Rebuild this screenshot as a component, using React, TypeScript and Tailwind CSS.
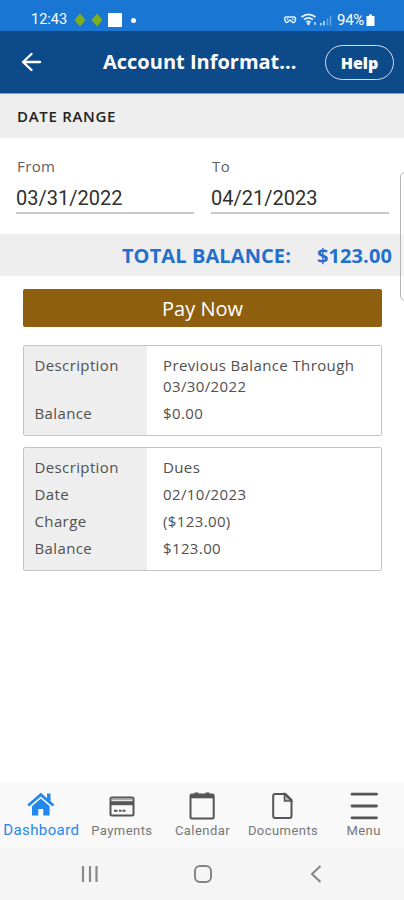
import type { ReactNode } from "react";

const PREVIOUS_BALANCE = [
  { label: "Description", value: "Previous Balance Through 03/30/2022" },
  { label: "Balance", value: "$0.00" },
];

const DUES = [
  { label: "Description", value: "Dues" },
  { label: "Date", value: "02/10/2023" },
  { label: "Charge", value: "($123.00)" },
  { label: "Balance", value: "$123.00" },
];

function StatusBar() {
  return (
    <div className="flex h-[31px] items-start justify-between bg-[#1976d2] pr-[29px] pl-[31px] font-['Roboto',sans-serif] text-white">
      <div className="flex items-center pt-[11px]">
        <span className="w-[37px] text-[14.5px] leading-[18px] whitespace-nowrap">12:43</span>
        <svg viewBox="0 0 32 18" className="ml-1.5 h-[18px] w-8" fill="#7fae1e">
          <path d="M6 2.5l5.5 6.5L6 15.5.5 9z" />
          <path d="M23 2.5L28.5 9 23 15.5 17.5 9z" />
        </svg>
        <div className="ml-0.5 h-3.5 w-3.5 bg-white" />
        <div className="ml-[9px] h-[5px] w-[5px] rounded-full bg-white" />
      </div>
      <div className="flex items-center pt-[11px]">
        <svg viewBox="0 0 50 18" className="h-[18px] w-[50px]" fill="none" stroke="#e4f0fb">
          <path d="M3 6h8a1.6 1.6 0 011.5 2l-.6 2.5a1.5 1.5 0 01-2.6.5L7 9l-2.3 2a1.5 1.5 0 01-2.5-.8L1.6 7.5A1.4 1.4 0 013 6zM3.8 8.2h1.5M9 8.2h1.5" strokeWidth="1.5" />
          <path d="M18.5 6c4.5-3.5 9.5-3.5 14 0M21 8.7c2.8-2.4 6.2-2.4 9 0M23.3 11.2c1.5-1.2 2.9-1.2 4.4 0" strokeWidth="1.7" />
          <path d="M25.5 11l1.7 1.7-1.7 1.8-1.7-1.8z" fill="#e4f0fb" stroke="none" />
          <path d="M32 11v3M38 12v2.5M41 10v4.5" strokeWidth="1.6" opacity="0.85" />
          <path d="M44.5 7.5v7M47.5 4.5v10" strokeWidth="1.5" opacity="0.4" />
        </svg>
        <span className="ml-1 w-[29px] text-[15px] leading-[18px] tracking-[-0.3px] whitespace-nowrap">94%</span>
        <svg viewBox="0 0 9 14" className="h-3.5 w-[9px]" fill="#fff">
          <path d="M3 1.5h3V3h2.5v10H.5V3H3z" />
        </svg>
      </div>
    </div>
  );
}

function Header() {
  return (
    <header className="flex h-[63px] items-center border-b border-[#8d9db5] bg-[#0d4a8a] pr-2.5 pl-[21px] text-white">
      <button type="button" aria-label="Back">
        <svg viewBox="0 0 21 20" className="h-5 w-[21px]" fill="none" stroke="currentColor" strokeWidth="2.4" strokeLinecap="round" strokeLinejoin="round">
          <path d="M19 10H2M10.5 2L2 10l8.5 8" />
        </svg>
      </button>
      <h1 className="ml-[61px] w-[195px] text-[20px] font-bold whitespace-nowrap">Account Informat...</h1>
      <button
        type="button"
        className="ml-auto h-[35px] w-[69px] rounded-full border border-[#d8dcea] pt-px text-[16px] font-extrabold"
      >
        Help
      </button>
    </header>
  );
}

function DateField({ label, value }: { label: string; value: string }) {
  return (
    <label className="flex-1">
      <span className="block pl-px text-[15px] leading-5 tracking-[0.4px] text-[#606060]">{label}</span>
      <span className="mt-2 block h-[30px] border-b-2 border-[#c8c8c8] font-['Roboto',sans-serif] text-[20px] leading-[28px] text-[#303030]">
        {value}
      </span>
    </label>
  );
}

function Card({ rows }: { rows: { label: string; value: string }[] }) {
  return (
    <div className="rounded-[2px] border border-[#c4c4c4] bg-[linear-gradient(to_right,#eeeeee_123px,#ffffff_123px)] pt-[9px] pb-[11px]">
      <dl className="flex flex-col gap-1.5 text-[15px] leading-[21px] tracking-[0.38px] text-[#505050]">
        {rows.map((row) => (
          <div key={row.label} className="flex">
            <dt className="w-[139px] shrink-0 pl-[10.5px]">{row.label}</dt>
            <dd className="w-[205px]">{row.value}</dd>
          </div>
        ))}
      </dl>
    </div>
  );
}

function NavItem({ label, active, children }: { label: string; active?: boolean; children: ReactNode }) {
  return (
    <a
      className={
        active
          ? "flex w-[81px] flex-col items-center text-[15px] tracking-[0.4px] text-[#2488eb]"
          : "flex w-[81px] flex-col items-center text-[13px] tracking-[0.45px] text-[#777777]"
      }
    >
      <svg viewBox="0 0 32 32" className="h-8 w-8" fill="none">
        {children}
      </svg>
      <span className="leading-[19px]">{label}</span>
    </a>
  );
}

function BottomNav() {
  return (
    <nav className="flex h-[66px] bg-[#f9f9f9] pt-[7px] pl-px font-['Roboto',sans-serif]">
      <NavItem label="Dashboard" active>
        <path d="M3.2 16.5L15.8 5.6l12.6 10.9" stroke="#2488eb" strokeWidth="2.8" />
        <path d="M22 4.5h3.5v8L22 9.5z" fill="#2488eb" />
        <path d="M7 17.2l8.8-7.6 8.8 7.6v9.3h-6.3V20h-5v6.5H7z" fill="#2488eb" />
      </NavItem>
      <NavItem label="Payments">
        <rect x="4.5" y="8.5" width="23" height="18" rx="1.5" stroke="#555" strokeWidth="2" />
        <path d="M4.5 14.2h23" stroke="#555" strokeWidth="4" />
        <path d="M5.5 10.5h21" stroke="#aaa" strokeWidth="1.5" />
        <path d="M8 21.8h3.5M13 21.8h2.5M16.5 21.8h3" stroke="#555" strokeWidth="2" />
      </NavItem>
      <NavItem label="Calendar">
        <rect x="4.5" y="5.5" width="23.2" height="24" rx="1.5" stroke="#555" strokeWidth="2" />
        <path d="M4.5 7.2h23" stroke="#555" strokeWidth="4.2" />
        <path d="M8.5 4.2h4M19.5 4.2h4" stroke="#555" strokeWidth="1.5" />
      </NavItem>
      <NavItem label="Documents">
        <path d="M8.2 5h10.3l6 6v16a2 2 0 01-2 2H8.2a2 2 0 01-2-2V7a2 2 0 012-2z" stroke="#555" strokeWidth="2" />
        <path d="M17.5 5v7h7z" fill="#bbb" stroke="#555" strokeWidth="1.6" />
      </NavItem>
      <NavItem label="Menu">
        <path d="M4 5.2h24.500M4 17h24.500M4 28.8h24.500" stroke="#555" strokeWidth="2.8" strokeLinecap="round" />
      </NavItem>
    </nav>
  );
}

function SystemBar() {
  return (
    <div className="flex h-[52px] items-center justify-between bg-[#f5f5f5] pr-[78px] pl-[80px]">
      <svg viewBox="0 0 20 20" className="h-5 w-5" stroke="#8a8a8a" strokeWidth="2.2">
        <path d="M3 2v16M10 2v16M16.5 2v16" />
      </svg>
      <svg viewBox="0 0 20 20" className="h-5 w-5" fill="none" stroke="#858585" strokeWidth="2">
        <rect x="2" y="2" width="16" height="16" rx="5" />
      </svg>
      <svg viewBox="0 0 20 20" className="h-5 w-5" fill="none" stroke="#858585" strokeWidth="2">
        <path d="M14.5 2L6 10l8.5 8" />
      </svg>
    </div>
  );
}

export default function App() {
  return (
    <div className="relative flex h-[900px] w-[404px] flex-col overflow-hidden bg-white font-['Open_Sans',sans-serif]">
      <StatusBar />
      <Header />
      <h2 className="h-11 bg-[#eeeeee] pl-[17px] text-[15px] leading-[44px] font-semibold tracking-[0.7px] text-[#222222]">
        DATE RANGE
      </h2>
      <div className="flex h-24 gap-[17px] pt-[18px] pr-[15px] pl-4">
        <DateField label="From" value="03/31/2022" />
        <DateField label="To" value="04/21/2023" />
      </div>
      <div className="flex h-[42px] items-center justify-end gap-[26px] bg-[#eeeeee] pt-0.5 pr-3 text-[20px] font-bold tracking-[0.1px] text-[#2370cc]">
        <span>TOTAL BALANCE:</span>
        <span>$123.00</span>
      </div>
      <main className="flex flex-1 flex-col pt-[13px] pr-[22px] pl-[23px]">
        <button type="button" className="h-[38px] shrink-0 rounded-[2px] bg-[#8f5f10] pt-px text-[20px] text-white">
          Pay Now
        </button>
        <div className="mt-[18px] flex flex-col gap-[11px]">
          <Card rows={PREVIOUS_BALANCE} />
          <Card rows={DUES} />
        </div>
      </main>
      <BottomNav />
      <SystemBar />
      {/* edge panel handle */}
      <div className="absolute top-[172px] -right-2 h-[129px] w-3 rounded-[5px] border border-[#b5b5b5] bg-white/40" />
    </div>
  );
}
